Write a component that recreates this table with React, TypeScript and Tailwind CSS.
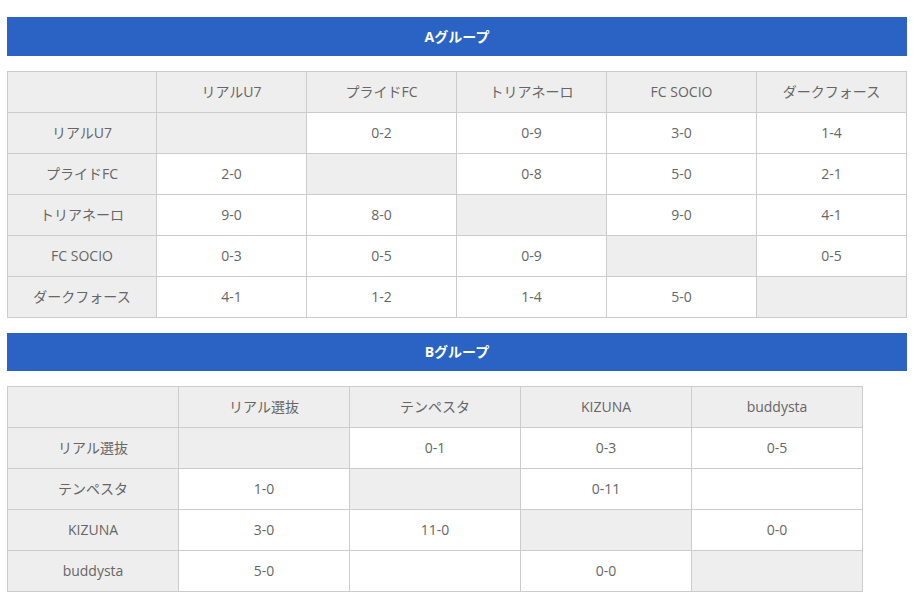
import React from "react";

const groupA = {
  title: "Aグループ",
  teams: ["リアルU7", "プライドFC", "トリアネーロ", "FC SOCIO", "ダークフォース"],
  rows: [
    ["", "0-2", "0-9", "3-0", "1-4"],
    ["2-0", "", "0-8", "5-0", "2-1"],
    ["9-0", "8-0", "", "9-0", "4-1"],
    ["0-3", "0-5", "0-9", "", "0-5"],
    ["4-1", "1-2", "1-4", "5-0", ""],
  ],
};

const groupB = {
  title: "Bグループ",
  teams: ["リアル選抜", "テンペスタ", "KIZUNA", "buddysta"],
  rows: [
    ["", "0-1", "0-3", "0-5"],
    ["1-0", "", "0-11", ""],
    ["3-0", "11-0", "", "0-0"],
    ["5-0", "", "0-0", ""],
  ],
};

function Header({ title, h }: { title: string; h: string }) {
  return (
    <div
      className={`w-[900px] ${h} bg-[#2b63c4] text-white font-bold text-[14px] flex items-center justify-center pb-[1px]`}
    >
      {title}
    </div>
  );
}

function Table({
  teams,
  rows,
  width,
  firstCol,
}: {
  teams: string[];
  rows: string[][];
  width: string;
  firstCol: string;
}) {
  return (
    <table className={`${width} table-fixed border-collapse text-[14px] text-[#666]`}>
      <colgroup>
        <col className={firstCol} />
        {teams.map((t) => (
          <col key={t} />
        ))}
      </colgroup>
      <thead>
        <tr className="h-[41px]">
          <th className="border border-[#ccc] bg-[#eee] font-normal"></th>
          {teams.map((t) => (
            <th key={t} className="border border-[#ccc] bg-[#eee] font-normal text-center pb-[2px]">
              {t}
            </th>
          ))}
        </tr>
      </thead>
      <tbody>
        {teams.map((t, i) => (
          <tr key={t} className="h-[41px]">
            <td className="border border-[#ccc] bg-[#eee] text-center pb-[2px]">{t}</td>
            {rows[i].map((c, j) => (
              <td
                key={j}
                className={`border border-[#ccc] text-center pb-[2px] ${i === j ? "bg-[#eee]" : "bg-white"}`}
              >
                {c}
              </td>
            ))}
          </tr>
        ))}
      </tbody>
    </table>
  );
}

export default function App() {
  return (
    <div
      className="w-[914px] h-[600px] bg-white px-[7px] pt-[17px] overflow-hidden"
      style={{ fontFamily: '"Open Sans", "Noto Sans CJK JP", sans-serif' }}
    >
      <Header title={groupA.title} h="h-[39px]" />
      <div className="mt-[15px]">
        <Table teams={groupA.teams} rows={groupA.rows} width="w-[900px]" firstCol="w-[149px]" />
      </div>
      <div className="mt-[15px]">
        <Header title={groupB.title} h="h-[38px]" />
      </div>
      <div className="mt-[15px]">
        <Table teams={groupB.teams} rows={groupB.rows} width="w-[856px]" firstCol="w-[171px]" />
      </div>
    </div>
  );
}
